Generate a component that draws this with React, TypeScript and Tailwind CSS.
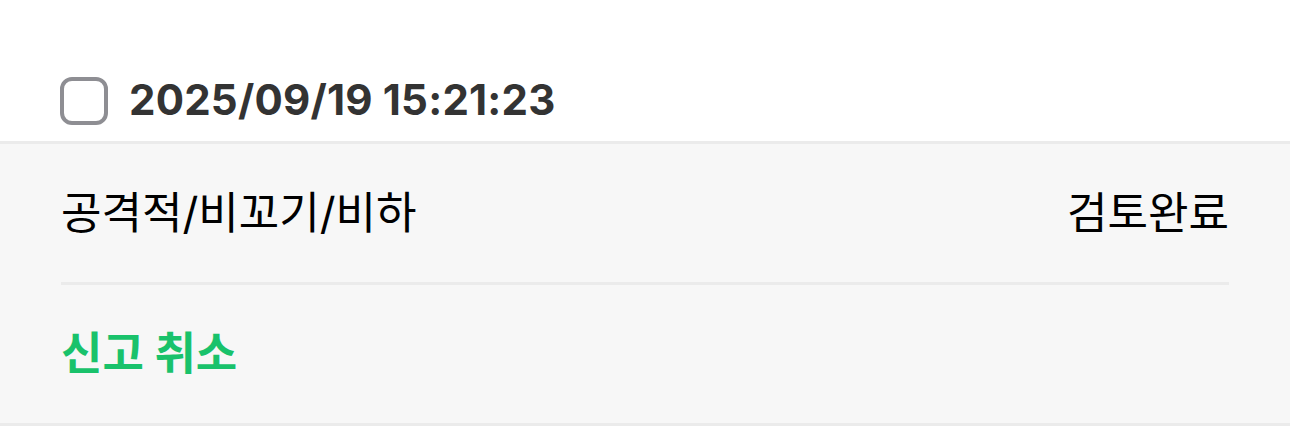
import React from 'react';

const font = { fontFamily: 'Inter, "Noto Sans CJK KR", sans-serif' };

const App: React.FC = () => {
    return (
        <div className="w-[1290px] h-[435px] bg-white" style={font}>
            {/* Header with checkbox and timestamp */}
            <div className="h-[141px] flex items-end pb-[16px] px-[60px] gap-[21px]">
                <div className="w-[48px] h-[48px] rounded-[12px] border-[4px] border-[#8e8e93] bg-white shrink-0" />
                <span className="text-[42px] font-bold text-[#333333] leading-none tracking-[0.2px] mb-[4px]">
                    2025/09/19 15:21:23
                </span>
            </div>

            {/* Report details */}
            <div className="bg-[#f7f7f7] border-t-[3px] border-b-[3px] border-[#ebebeb]">
                <div className="px-[61px]">
                    <div className="h-[138px] flex items-center justify-between text-[44px] text-black">
                        <span>공격적/비꼬기/비하</span>
                        <span>검토완료</span>
                    </div>
                    <div className="h-[3px] bg-[#ebebeb]" />
                    <div className="h-[138px] flex items-center">
                        <span className="text-[45px] font-bold text-[#19c26b]">신고 취소</span>
                    </div>
                </div>
            </div>
        </div>
    );
};

export default App;
